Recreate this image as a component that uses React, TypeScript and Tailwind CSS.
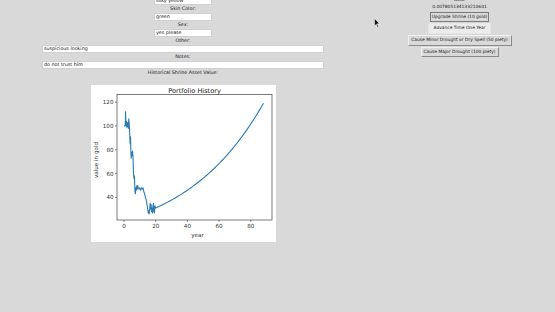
import React from "react";

const jag: [number, number][] = [
  [0, 100], [0.4, 100], [0.8, 101], [1, 112], [1.2, 100], [1.5, 104], [1.8, 99], [2.1, 103],
  [2.4, 100], [2.7, 98], [3, 106], [3.3, 101], [3.5, 97], [3.7, 90], [3.9, 85], [4.1, 91],
  [4.3, 80], [4.5, 73], [4.8, 78], [5.1, 75], [5.4, 79], [5.7, 74], [6, 60], [6.3, 56],
  [6.6, 58], [6.9, 45], [7.2, 43], [7.5, 48], [7.8, 46], [8.1, 50], [8.4, 47], [8.7, 50],
  [9, 48], [9.5, 47], [10, 48], [10.5, 46], [11, 48], [11.5, 47], [12, 48], [12.5, 45],
  [13, 43], [13.5, 40], [14, 38], [14.5, 34], [15, 30], [15.3, 27], [15.6, 29], [15.9, 26],
  [16.2, 30], [16.5, 35], [16.8, 30], [17.1, 34], [17.4, 28], [17.7, 31], [18, 27],
  [18.3, 33], [18.6, 35], [18.9, 28], [19.2, 27], [19.5, 33],
];
const smooth: [number, number][] = [];
for (let y = 20; y <= 88; y += 1) smooth.push([y, 31 * Math.pow(1.02, y - 20)]);
const data = [...jag, ...smooth];
const mx = (y: number) => 33 + y * 1.585;
const my = (v: number) => 41 - (v - 100) * 1.19;
const pts = data.map(([a, b]) => `${mx(a).toFixed(2)},${my(b).toFixed(2)}`).join(" ");

function Chart() {
  const L = 26, R = 181, T = 9.5, B = 135;
  return (
    <svg width="185" height="157" viewBox="0 0 185 157" className="bg-white block" style={{ fontFamily: "'DejaVu Sans', sans-serif" }}>
      <text x={(L + R) / 2} y={8.2} fontSize="6.6" textAnchor="middle" fill="#222">Portfolio History</text>
      <polyline points={pts} fill="none" stroke="#2a7ab5" strokeWidth="1.1" strokeLinejoin="round" />
      <rect x={L} y={T} width={R - L} height={B - T} fill="none" stroke="#444" strokeWidth="0.7" />
      {[0, 20, 40, 60, 80].map((t) => (
        <g key={t}>
          <line x1={mx(t)} x2={mx(t)} y1={B} y2={B + 2} stroke="#444" strokeWidth="0.6" />
          <text x={mx(t)} y={B + 8} fontSize="5.6" textAnchor="middle" fill="#333">{t}</text>
        </g>
      ))}
      {[40, 60, 80, 100, 120].map((t) => (
        <g key={t}>
          <line x1={L - 2} x2={L} y1={my(t)} y2={my(t)} stroke="#444" strokeWidth="0.6" />
          <text x={L - 3.5} y={my(t) + 2} fontSize="5.6" textAnchor="end" fill="#333">{t}</text>
        </g>
      ))}
      <text x={(L + R) / 2 + 3} y={152} fontSize="5.6" textAnchor="middle" fill="#333">year</text>
      <text x={6.5} y={75} fontSize="5.6" textAnchor="middle" fill="#333" transform="rotate(-90 6.5 75)">value in gold</text>
    </svg>
  );
}

const Label = ({ children }: { children: React.ReactNode }) => (
  <div className="h-[8px] leading-[8px] text-[4.8px] font-medium text-[#1a1a1a] whitespace-nowrap">{children}</div>
);
const Input = ({ w, value }: { w: string; value: string }) => (
  <div className={`${w} h-[8px] bg-white border border-[#d0d0d0] text-[4.8px] leading-[6px] pl-px text-[#111] whitespace-nowrap overflow-hidden`}>{value}</div>
);

export default function App() {
  return (
    <div className="w-[555px] h-[312px] bg-[#d9d9d9] relative overflow-hidden flex" style={{ fontFamily: "'DejaVu Sans', sans-serif" }}>
      <div className="w-[366px] flex flex-col items-center mt-[-3px]">
        <Input w="w-[58px]" value="silky yellow" />
        <Label>Skin Color:</Label>
        <Input w="w-[58px]" value="green" />
        <Label>Sex:</Label>
        <Input w="w-[58px]" value="yes please" />
        <Label>Other:</Label>
        <Input w="w-[282px]" value="suspicious looking" />
        <Label>Notes:</Label>
        <Input w="w-[282px]" value="do not trust him" />
        <Label>Historical Shrine Asset Value:</Label>
        <div className="mt-[8px]">
          <Chart />
        </div>
      </div>
      <div className="w-[187px] flex flex-col items-center mt-[-4px] text-[4.4px] text-[#1a1a1a]">
        <div className="h-[7px] leading-[7px] font-medium">Gold:</div>
        <div className="h-[8px] leading-[8px]">0.007805134133210601</div>
        <div className="mt-px h-[10px] w-[59px] flex items-center justify-center border border-[#7a7a7a] bg-[#d9d9d9] whitespace-nowrap">Upgrade Shrine (10 gold)</div>
        <div className="mt-px h-[11px] w-[63px] flex items-center justify-center border border-[#e6e6e6] bg-[#ececec] whitespace-nowrap">Advance Time One Year</div>
        <div className="mt-px h-[11px] w-[104px] flex items-center justify-center border border-t-[#f0f0f0] border-l-[#f0f0f0] border-r-[#8a8a8a] border-b-[#8a8a8a] bg-[#d9d9d9] whitespace-nowrap">Cause Minor Drought or Dry Spell (50 piety)</div>
        <div className="mt-px h-[10px] w-[78px] flex items-center justify-center border border-t-[#f0f0f0] border-l-[#f0f0f0] border-r-[#8a8a8a] border-b-[#8a8a8a] bg-[#d9d9d9] whitespace-nowrap">Cause Major Drought (100 piety)</div>
      </div>
      <svg className="absolute left-[374px] top-[18px]" width="6" height="10" viewBox="0 0 12 20">
        <path d="M1 1 L1 16 L4.5 12.5 L7 18.5 L9 17.5 L6.5 11.5 L11 11.5 Z" fill="#111" stroke="#fff" strokeWidth="1" />
      </svg>
    </div>
  );
}
